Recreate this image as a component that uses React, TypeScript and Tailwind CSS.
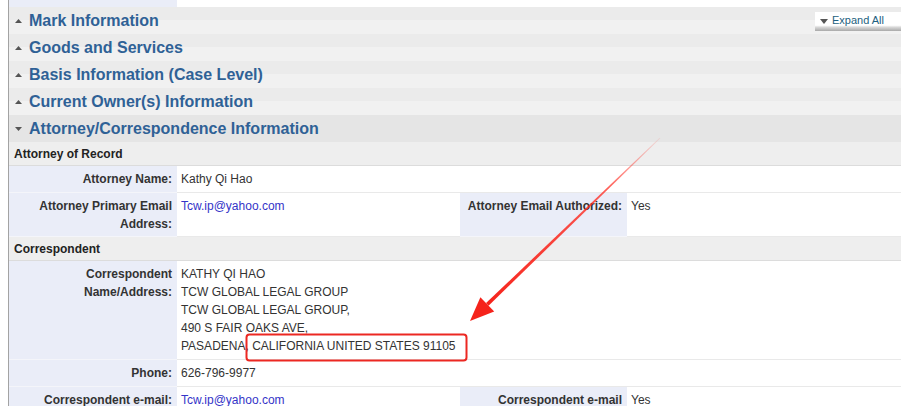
import React from "react";

function Tri({ up }: { up: boolean }) {
  return (
    <svg width="7" height="4" viewBox="0 0 7 4" className="shrink-0">
      {up ? <polygon points="0,4 3.5,0 7,4" fill="#555" /> : <polygon points="0,0 7,0 3.5,4" fill="#555" />}
    </svg>
  );
}

function Header({ title, open }: { title: string; open?: boolean }) {
  return (
    <div
      className={
        "h-[27px] shrink-0 flex items-center pl-[6px] gap-[7px] " +
        (open ? "bg-[#e5e5e5]" : "bg-[linear-gradient(#ebebeb_50%,#f1f1f1_50%)]")
      }
    >
      <Tri up={!open} />
      <span className="text-[16px] leading-[27px] font-bold text-[#2f6196]">{title}</span>
    </div>
  );
}

function Sub({ title }: { title: string }) {
  return (
    <div className="shrink-0 bg-[#eeeeee] pl-[5px] pt-[3px] pb-[2px] text-[12px] leading-[18px] font-bold text-[#222] border-b border-[#dcdcdc]">
      {title}
    </div>
  );
}

const labelCls =
  "bg-[#eaedf8] text-right pr-[5px] pl-[6px] pt-[4px] font-bold text-[#333] border-b border-[#f4f5fa]";
const valueCls = "pl-[4px] pt-[4px] text-[#333] border-b border-[#e9e9e9]";
const linkCls = "text-[#3434c8]";

export default function App() {
  return (
    <div className="relative w-[901px] h-[406px] overflow-hidden bg-white font-['Liberation_Sans',Arial,sans-serif] text-[12px] leading-[18px]">
      <div className="ml-[8px] border-l border-[#a3a3a3] h-full flex flex-col">
        <div className="h-[7px] shrink-0 flex">
          <div className="w-[168px] bg-[#eaedf8]" />
        </div>
        <Header title="Mark Information" />
        <Header title="Goods and Services" />
        <Header title="Basis Information (Case Level)" />
        <Header title="Current Owner(s) Information" />
        <Header title="Attorney/Correspondence Information" open />
        <Sub title="Attorney of Record" />
        <div className="grid grid-cols-[168px_283px_167px_1fr] shrink-0">
          <div className={labelCls + " pb-[4px]"}>Attorney Name:</div>
          <div className={valueCls + " pb-[4px] col-span-3"}>Kathy Qi Hao</div>

          <div className={labelCls + " pb-[3px]"}>Attorney Primary Email Address:</div>
          <div className={valueCls + " pb-[3px]"}>
            <span className={linkCls}>Tcw.ip@yahoo.com</span>
          </div>
          <div className={labelCls + " pb-[3px]"}>Attorney Email Authorized:</div>
          <div className={valueCls + " pb-[3px]"}>Yes</div>
        </div>
        <Sub title="Correspondent" />
        <div className="grid grid-cols-[168px_283px_167px_1fr] shrink-0">
          <div className={labelCls + " pb-[4px]"}>Correspondent Name/Address:</div>
          <div className={valueCls + " pb-[4px] col-span-3"}>
            <div>KATHY QI HAO</div>
            <div>TCW GLOBAL LEGAL GROUP</div>
            <div>TCW GLOBAL LEGAL GROUP,</div>
            <div>490 S FAIR OAKS AVE,</div>
            <div>PASADENA, CALIFORNIA UNITED STATES 91105</div>
          </div>

          <div className={labelCls + " pb-[4px]"}>Phone:</div>
          <div className={valueCls + " pb-[4px] col-span-3"}>626-796-9977</div>

          <div className={labelCls + " pb-[3px]"}>Correspondent e-mail:</div>
          <div className={valueCls + " pb-[3px]"}>
            <span className={linkCls}>Tcw.ip@yahoo.com</span>
          </div>
          <div className={labelCls + " pb-[3px]"}>Correspondent e-mail Authorized:</div>
          <div className={valueCls + " pb-[3px]"}>Yes</div>
        </div>
      </div>

      <div className="absolute right-0 top-[12px] w-[86px] h-[19px] bg-[linear-gradient(#ffffff_0%,#ffffff_70%,#d8d8d8_80%,#a8a8a8_100%)] flex items-start pt-[2px] pl-[5px] gap-[4px]">
        <svg width="8" height="5" viewBox="0 0 8 5" className="mt-[5px]">
          <polygon points="0,0 8,0 4,5" fill="#555" />
        </svg>
        <span className="text-[11px] leading-[13px] text-[#1d5f80]">Expand All</span>
      </div>

      <svg className="absolute inset-0 pointer-events-none" width="901" height="406" viewBox="0 0 901 406">
        <defs>
          <linearGradient id="ag" gradientUnits="userSpaceOnUse" x1="660" y1="138" x2="487" y2="304">
            <stop offset="0" stopColor="#ff3328" stopOpacity="0.1" />
            <stop offset="0.3" stopColor="#ff2a20" stopOpacity="0.75" />
            <stop offset="1" stopColor="#f5231b" stopOpacity="1" />
          </linearGradient>
        </defs>
        <polygon points="660.35,138.36 659.65,137.64 486.05,303.1 488.55,305.7" fill="url(#ag)" />
        <polygon points="470,321 494.2,311.6 480.4,297.2" fill="#f5231b" />
        <rect x="246.5" y="334.5" width="220" height="26" rx="3" fill="none" stroke="#ec2822" strokeWidth="2" />
      </svg>
    </div>
  );
}
